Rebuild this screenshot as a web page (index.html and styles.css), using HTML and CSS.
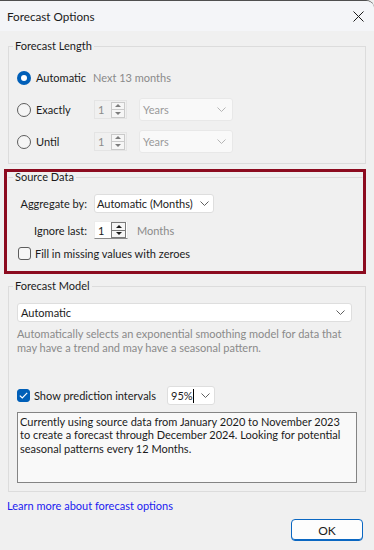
FILE: index.html
```html
<!DOCTYPE html>
<html>
<head>
    <title>Forecast Options</title>
    <link rel="stylesheet" href="styles.css">
</head>
<body>
<div class="window">
    <div class="titlebar">
        <span class="title">Forecast Options</span>
        <svg class="close" width="11" height="11" viewBox="0 0 11 11">
            <path d="M0.5 0.5 L10.5 10.5 M10.5 0.5 L0.5 10.5" stroke="#1b1b1b" stroke-width="1" fill="none"/>
        </svg>
    </div>

    <div class="content">
        <fieldset class="group group-length">
            <legend>Forecast Length</legend>
            <div class="group-body">
                <div class="row">
                    <label class="choice"><span class="radio checked"></span>Automatic</label>
                    <span class="muted">Next 13 months</span>
                </div>
                <div class="row">
                    <label class="choice"><span class="radio"></span>Exactly</label>
                    <div class="spin spin-off">
                        <span>1</span>
                        <span class="spin-buttons"><span class="up"></span><span class="down"></span></span>
                    </div>
                    <div class="combo combo-off">
                        <span>Years</span>
                        <svg width="9" height="5" viewBox="0 0 9 5"><path d="M0.5 0.5 L4.5 4.5 L8.5 0.5" stroke="#b5b5b5" fill="none"/></svg>
                    </div>
                </div>
                <div class="row">
                    <label class="choice"><span class="radio"></span>Until</label>
                    <div class="spin spin-off">
                        <span>1</span>
                        <span class="spin-buttons"><span class="up"></span><span class="down"></span></span>
                    </div>
                    <div class="combo combo-off">
                        <span>Years</span>
                        <svg width="9" height="5" viewBox="0 0 9 5"><path d="M0.5 0.5 L4.5 4.5 L8.5 0.5" stroke="#b5b5b5" fill="none"/></svg>
                    </div>
                </div>
            </div>
        </fieldset>

        <div class="highlight">
            <fieldset class="group group-source">
                <legend>Source Data</legend>
                <div class="group-body">
                    <div class="form-grid">
                        <span class="field-label">Aggregate by:</span>
                        <div class="combo combo-aggregate">
                            <span>Automatic (Months)</span>
                            <svg width="9" height="5" viewBox="0 0 9 5"><path d="M0.5 0.5 L4.5 4.5 L8.5 0.5" stroke="#5f5f5f" fill="none"/></svg>
                        </div>
                        <span class="field-label">Ignore last:</span>
                        <div class="spin-line">
                            <div class="spin spin-on">
                                <span>1</span>
                                <span class="spin-buttons"><span class="up"></span><span class="down"></span></span>
                            </div>
                            <span class="muted">Months</span>
                        </div>
                    </div>
                    <label class="check-row">
                        <span class="checkbox"></span>Fill in missing values with zeroes
                    </label>
                </div>
            </fieldset>
        </div>

        <fieldset class="group group-model">
            <legend>Forecast Model</legend>
            <div class="group-body">
                <div class="combo combo-model">
                    <span>Automatic</span>
                    <svg width="9" height="5" viewBox="0 0 9 5"><path d="M0.5 0.5 L4.5 4.5 L8.5 0.5" stroke="#5f5f5f" fill="none"/></svg>
                </div>
                <p class="description">Automatically selects an exponential smoothing model for data that<br>may have a trend and may have a seasonal pattern.</p>
                <div class="interval-row">
                    <label class="check-row interval-label">
                        <span class="checkbox checked">
                            <svg width="9" height="7" viewBox="0 0 9 7"><path d="M0.8 3.6 L3.3 6 L8.2 0.9" stroke="#fff" stroke-width="1.2" fill="none"/></svg>
                        </span>Show prediction intervals
                    </label>
                    <div class="combo combo-percent">
                        <span>95%<span class="caret"></span></span>
                        <svg width="9" height="5" viewBox="0 0 9 5"><path d="M0.5 0.5 L4.5 4.5 L8.5 0.5" stroke="#5f5f5f" fill="none"/></svg>
                    </div>
                </div>
                <div class="summary">Currently using source data from January 2020 to November 2023<br>to create a forecast through December 2024. Looking for potential<br>seasonal patterns every 12 Months.</div>
            </div>
        </fieldset>

        <a class="learn" href="#">Learn more about forecast options</a>

        <div class="footer">
            <button type="button" class="ok">OK</button>
        </div>
    </div>
</div>
</body>
</html>
```

FILE: styles.css
```css
* {
    box-sizing: border-box;
}

body {
    margin: 0;
    background: #f0f0f0;
    font-family: Lato, "Liberation Sans", sans-serif;
    font-size: 11px;
    color: #1b1b1b;
    white-space: nowrap;
}

.window {
    width: 374px;
    height: 550px;
    border-top: 1px solid #4f4f4f;
    border-top-right-radius: 8px;
    overflow: hidden;
    background: #f0f0f0;
}

.titlebar {
    height: 30px;
    background: #f4f5f8;
    display: flex;
    align-items: center;
    justify-content: space-between;
    padding: 0 10px 0 7px;
}

.title {
    font-size: 11.7px;
}

.content {
    padding: 7px 8px 0;
}

/* group boxes */
.group {
    margin: 0;
    padding: 0 4px;
    border: 1px solid #dcdcdc;
    min-width: 0;
}

.group legend {
    padding: 0 2px;
    line-height: 16px;
}

.group-length .group-body {
    padding: 12px 4px 10px;
    display: flex;
    flex-direction: column;
    gap: 9px;
}

.row {
    display: flex;
    align-items: center;
    height: 23px;
}

.choice {
    width: 76px;
    display: flex;
    align-items: center;
    gap: 5px;
}

.radio {
    width: 14px;
    height: 14px;
    border-radius: 50%;
    border: 1px solid #5d5d5d;
    background: #f5f5f5;
    display: inline-block;
}

.radio.checked {
    border: none;
    background: #005fb8;
    position: relative;
}

.radio.checked::after {
    content: '';
    position: absolute;
    left: 4px;
    top: 4px;
    width: 6px;
    height: 6px;
    border-radius: 50%;
    background: #fff;
}

.muted {
    color: #8a8a8a;
}

/* spin boxes */
.spin {
    display: flex;
    align-items: center;
    justify-content: space-between;
    padding: 0 1px 0 3px;
}

.spin-off {
    width: 33px;
    height: 19px;
    margin-left: 1px;
    border: 1px solid #e4e4e4;
    color: #8a8a8a;
}

.spin-on {
    width: 34px;
    height: 18px;
    background: #fff;
    border: 1px solid #ececec;
    border-bottom-color: #8a8a8a;
}

.spin-buttons {
    width: 15px;
    height: 16px;
    display: flex;
    flex-direction: column;
    border: 1px solid #7a7a7a;
    background: #f6f6f6;
}

.spin-off .spin-buttons {
    width: 14px;
    height: 16px;
    border-color: #cacaca;
}

.spin-buttons .up,
.spin-buttons .down {
    flex: 1;
    display: flex;
    align-items: center;
    justify-content: center;
}

.spin-buttons .up {
    border-bottom: 1px solid #7a7a7a;
}

.spin-off .spin-buttons .up {
    border-bottom-color: #cacaca;
}

.spin-buttons .up::before {
    content: '';
    border-left: 3px solid transparent;
    border-right: 3px solid transparent;
    border-bottom: 3px solid #1b1b1b;
}

.spin-buttons .down::before {
    content: '';
    border-left: 3px solid transparent;
    border-right: 3px solid transparent;
    border-top: 3px solid #1b1b1b;
}

.spin-off .spin-buttons .up::before {
    border-bottom-color: #7d7d7d;
}

.spin-off .spin-buttons .down::before {
    border-top-color: #7d7d7d;
}

/* drop downs */
.combo {
    display: flex;
    align-items: center;
    justify-content: space-between;
    background: #fff;
    border: 1px solid #dedede;
    border-radius: 3px;
    padding: 0 4px 0 2px;
}

.combo-off {
    width: 94px;
    height: 23px;
    margin-left: 12px;
    background: #f9f9f9;
    border-color: #e8e8e8;
    color: #9a9a9a;
    padding: 0 6px 0 3px;
}

.combo-aggregate {
    width: 120px;
    height: 19px;
}

.combo-model {
    width: 335px;
    height: 19px;
    padding: 0 6px 0 3px;
}

.combo-percent {
    width: 48px;
    height: 19px;
    padding: 0 4px 0 3px;
}

.caret {
    display: inline-block;
    width: 1px;
    height: 14px;
    background: #000;
    vertical-align: -3px;
}

/* source data */
.highlight {
    margin: 5px 0 0 -4px;
    border: 3px solid #8c0b1f;
}

.group-source {
    margin: -1px 0 0 1px;
    border-color: #dcdcdc transparent transparent;
}

.group-source legend {
    line-height: 12px;
}

.group-source .group-body {
    padding: 11px 4px 10px;
}

.form-grid {
    display: grid;
    grid-template-columns: 70px auto;
    column-gap: 7px;
    row-gap: 8px;
    align-items: center;
    justify-items: start;
}

.field-label {
    justify-self: end;
}

.spin-line {
    display: flex;
    align-items: center;
    gap: 9px;
}

.check-row {
    display: flex;
    align-items: center;
    gap: 4px;
    height: 13px;
    margin-top: 8px;
    margin-left: 1px;
}

.checkbox {
    width: 13px;
    height: 13px;
    border: 1px solid #5d5d5d;
    border-radius: 3px;
    background: #f6f6f6;
    display: inline-flex;
    align-items: center;
    justify-content: center;
}

.checkbox.checked {
    background: #005fb8;
    border-color: #005fb8;
}

/* forecast model */
.group-model {
    margin-top: 4px;
}

.group-model .group-body {
    padding: 9px 4px 8px;
}

.description {
    margin: 5px 0 0;
    line-height: 14px;
    color: #8a8a8a;
}

.interval-row {
    display: flex;
    align-items: center;
    height: 19px;
    margin-top: 31px;
}

.interval-label {
    width: 150px;
    margin: 0;
    height: 19px;
}

.summary {
    margin-top: 7px;
    height: 71px;
    border: 1px solid #848484;
    background: #f9f9f9;
    padding: 2px 2px;
    line-height: 13.3px;
}

.learn {
    display: block;
    margin: 6px 0 0 -1px;
    line-height: 16px;
    color: #1b1bf0;
    text-decoration: none;
}

.footer {
    display: flex;
    justify-content: flex-end;
    margin-top: 5px;
    padding-right: 3px;
}

.ok {
    width: 72px;
    height: 22px;
    font-family: inherit;
    font-size: 12px;
    color: #1b1b1b;
    background: #fdfdfd;
    border: 1px solid #0a67c2;
    border-radius: 4px;
    box-shadow: inset 0 -1px 0 #0a67c2;
    padding: 0;
}
```
